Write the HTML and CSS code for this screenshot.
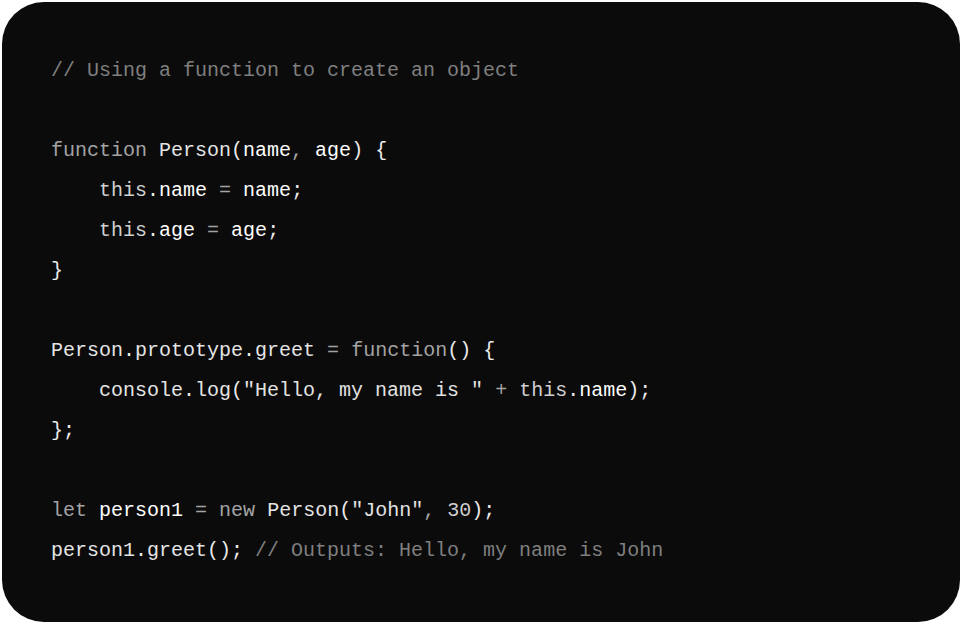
FILE: index.html
```html
<!DOCTYPE html>
<html>
<head>
<meta charset="utf-8">
<link rel="stylesheet" href="styles.css">
</head>
<body>
<div class="card">
<pre class="code"><span class="cm">// Using a function to create an object</span>

<span class="kw">function</span> <span class="id">Person</span><span class="pn">(</span><span class="hi">name</span><span class="kw">,</span> <span class="hi">age</span><span class="pn">) {</span>
    <span class="th">this</span><span class="pn">.</span><span class="hi">name</span> <span class="kw">=</span> <span class="hi">name</span><span class="pn">;</span>
    <span class="th">this</span><span class="pn">.</span><span class="hi">age</span> <span class="kw">=</span> <span class="hi">age</span><span class="pn">;</span>
<span class="pn">}</span>

<span class="id">Person</span><span class="pn">.</span><span class="id">prototype</span><span class="pn">.</span><span class="id">greet</span> <span class="kw">=</span> <span class="kw">function</span><span class="pn">() {</span>
    <span class="id">console</span><span class="pn">.</span><span class="id">log</span><span class="pn">(</span><span class="st">"Hello, my name is "</span> <span class="kw">+</span> <span class="th">this</span><span class="pn">.</span><span class="hi">name</span><span class="pn">);</span>
<span class="pn">};</span>

<span class="kw">let</span> <span class="hi">person1</span> <span class="kw">=</span> <span class="kw">new</span> <span class="id">Person</span><span class="pn">(</span><span class="st">"John"</span><span class="kw">,</span> <span class="nu">30</span><span class="pn">);</span>
<span class="id">person1</span><span class="pn">.</span><span class="id">greet</span><span class="pn">();</span> <span class="cm">// Outputs: Hello, my name is John</span></pre>
</div>
</body>
</html>
```

FILE: styles.css
```css
html, body {
  margin: 0;
  padding: 0;
  background: #ffffff;
}

body {
  padding: 2px 2px 4px 2px;
}

.card {
  background: #0b0b0b;
  border-radius: 42px;
  height: 620px;
  box-sizing: border-box;
  padding: 49px 49px 47px 49px;
}

.code {
  margin: 0;
  font-family: "Liberation Mono", monospace;
  font-size: 20px;
  line-height: 40px;
  color: #e6e6e6;
  white-space: pre;
}

.cm { color: #7f7f7f; }
.kw { color: #a3a3a3; }
.id { color: #e4e4e4; }
.hi { color: #ffffff; }
.th { color: #d0d0d0; }
.pn { color: #ececec; }
.st { color: #e2e2e2; }
.nu { color: #cfcfcf; }
```
